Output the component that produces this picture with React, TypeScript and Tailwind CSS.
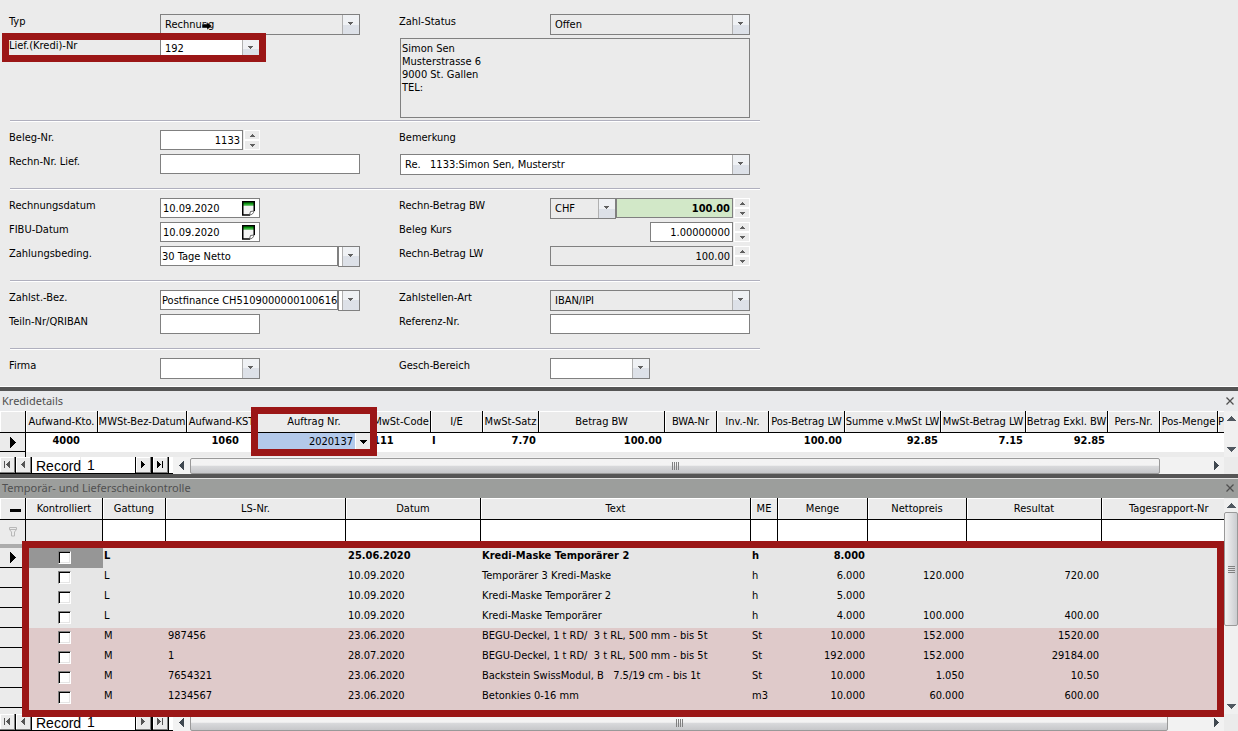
import { useState } from 'react'
import type { ReactNode } from 'react'
import clsx from 'clsx'

interface Position {
  gattung: string
  lsNr: string
  datum: string
  text: string
  me: string
  menge: string
  nettopreis: string
  resultat: string
}

const positionen: Position[] = [
  { gattung: 'L', lsNr: '', datum: '25.06.2020', text: 'Kredi-Maske Temporärer 2', me: 'h', menge: '8.000', nettopreis: '', resultat: '' },
  { gattung: 'L', lsNr: '', datum: '10.09.2020', text: 'Temporärer 3 Kredi-Maske', me: 'h', menge: '6.000', nettopreis: '120.000', resultat: '720.00' },
  { gattung: 'L', lsNr: '', datum: '10.09.2020', text: 'Kredi-Maske Temporärer 2', me: 'h', menge: '5.000', nettopreis: '', resultat: '' },
  { gattung: 'L', lsNr: '', datum: '10.09.2020', text: 'Kredi-Maske Temporärer', me: 'h', menge: '4.000', nettopreis: '100.000', resultat: '400.00' },
  { gattung: 'M', lsNr: '987456', datum: '23.06.2020', text: 'BEGU-Deckel, 1 t RD/  3 t RL, 500 mm - bis 5t', me: 'St', menge: '10.000', nettopreis: '152.000', resultat: '1520.00' },
  { gattung: 'M', lsNr: '1', datum: '28.07.2020', text: 'BEGU-Deckel, 1 t RD/  3 t RL, 500 mm - bis 5t', me: 'St', menge: '192.000', nettopreis: '152.000', resultat: '29184.00' },
  { gattung: 'M', lsNr: '7654321', datum: '23.06.2020', text: 'Backstein SwissModul, B   7.5/19 cm - bis 1t', me: 'St', menge: '10.000', nettopreis: '1.050', resultat: '10.50' },
  { gattung: 'M', lsNr: '1234567', datum: '23.06.2020', text: 'Betonkies 0-16 mm', me: 'm3', menge: '10.000', nettopreis: '60.000', resultat: '600.00' },
]

const detailColumns = [
  { title: 'Aufwand-Kto.', width: 'w-[72px]', value: '4000', cell: 'text-right pr-[18px]' },
  { title: 'MWSt-Bez-Datum', width: 'w-[89px]', value: '', cell: '' },
  { title: 'Aufwand-KST', width: 'w-[70px]', value: '1060', cell: 'text-right pr-[18px]' },
  { title: 'Auftrag Nr.', width: 'w-[115px]', value: '2020137', cell: '' },
  { title: 'MwSt-Code', width: 'w-[59px]', value: '111', cell: 'pl-px' },
  { title: 'I/E', width: 'w-[52px]', value: 'I', cell: 'pl-px' },
  { title: 'MwSt-Satz', width: 'w-[56px]', value: '7.70', cell: 'text-right pr-[3px]' },
  { title: 'Betrag BW', width: 'w-[126px]', value: '100.00', cell: 'text-right pr-[3px]' },
  { title: 'BWA-Nr', width: 'w-[52px]', value: '', cell: '' },
  { title: 'Inv.-Nr.', width: 'w-[52px]', value: '', cell: '' },
  { title: 'Pos-Betrag LW', width: 'w-[76px]', value: '100.00', cell: 'text-right pr-[3px]' },
  { title: 'Summe v.MwSt LW', width: 'w-[96px]', value: '92.85', cell: 'text-right pr-[3px]' },
  { title: 'MwSt-Betrag LW', width: 'w-[85px]', value: '7.15', cell: 'text-right pr-[3px]' },
  { title: 'Betrag Exkl. BW', width: 'w-[82px]', value: '92.85', cell: 'text-right pr-[3px]' },
  { title: 'Pers-Nr.', width: 'w-[52px]', value: '', cell: '' },
  { title: 'Pos-Menge', width: 'w-[58px]', value: '', cell: '' },
]

const kontrollColumns = [
  { title: 'Kontrolliert', width: 'w-[77px]' },
  { title: 'Gattung', width: 'w-[63px]' },
  { title: 'LS-Nr.', width: 'w-[180px]' },
  { title: 'Datum', width: 'w-[135px]' },
  { title: 'Text', width: 'w-[270px]' },
  { title: 'ME', width: 'w-[27px]' },
  { title: 'Menge', width: 'w-[90px]' },
  { title: 'Nettopreis', width: 'w-[99px]' },
  { title: 'Resultat', width: 'w-[135px]' },
]

const box = 'h-5 min-w-0 border border-[#808080] bg-white outline-none'
const th = 'h-full overflow-hidden border-r border-b border-black bg-[#ebebeb] p-0 font-normal leading-4 whitespace-nowrap shadow-[inset_1px_1px_0_#fff]'

function Triangle({ dir, size = 5, color = '#606060' }: { dir: 'up' | 'down' | 'left' | 'right'; size?: number; color?: string }) {
  const half = Math.ceil(size / 2)
  const vertical = dir === 'up' || dir === 'down'
  const w = vertical ? size : half
  const h = vertical ? half : size
  const points = {
    up: `0,${h} ${w},${h} ${w / 2},0`,
    down: `0,0 ${w},0 ${w / 2},${h}`,
    left: `${w},0 ${w},${h} 0,${h / 2}`,
    right: `0,0 0,${h} ${w},${h / 2}`,
  }[dir]
  return (
    <svg width={w} height={h} viewBox={`0 0 ${w} ${h}`} shapeRendering="crispEdges" className="shrink-0">
      <polygon points={points} fill={color} />
    </svg>
  )
}

function ArrowFace() {
  return (
    <span className="flex h-full w-4 items-center justify-center bg-linear-to-b from-[#eff1f4] from-50% to-[#dde1e8] to-50% pr-px pb-[2px]">
      <Triangle dir="down" />
    </span>
  )
}

function Combo({ id, value, className, label }: { id: string; value: string; className: string; label?: string }) {
  return (
    <div className={clsx('relative h-[21px] border border-[#808080]', className)}>
      <select id={id} aria-label={label} className="h-full w-full appearance-none bg-transparent pr-5 pl-1 outline-none">
        <option>{value}</option>
      </select>
      <span className="pointer-events-none absolute inset-y-0 right-0 border-l border-[#b0b0b0]">
        <ArrowFace />
      </span>
    </div>
  )
}

function Spinner() {
  return (
    <span className="ml-px flex h-5 w-4 flex-col justify-between border border-white bg-white">
      <button type="button" aria-label="Erhöhen" className="flex h-2 items-center justify-center bg-[#ebebeb]">
        <Triangle dir="up" />
      </button>
      <button type="button" aria-label="Verringern" className="flex h-2 items-center justify-center bg-[#ebebeb]">
        <Triangle dir="down" />
      </button>
    </span>
  )
}

function DateField({ id, value }: { id: string; value: string }) {
  return (
    <div className="flex h-5 w-[100px] items-center border border-[#808080] bg-white pr-1">
      <input id={id} defaultValue={value} className="h-full w-full min-w-0 pl-[2px] outline-none" />
      <button type="button" aria-label="Kalender">
        <svg width="13" height="15" viewBox="0 0 13 15">
          <path d="M.5 .5h11.500v10l-3.500 3.500h-8z" fill="#f4f4f4" />
          <path d="M1 1h11v3.500H1z" fill="#0c9412" />
          <path d="M1 3.500h11v1H1z" fill="#5cc05c" />
          <path d="M8 14H.75V.75h11.500V10" fill="none" stroke="#000" strokeWidth="1.500" />
          <path d="M12 10c-.5 2.500-2 3.800-4.500 4l1-3.500z" fill="#fff" stroke="#444" strokeWidth=".8" />
        </svg>
      </button>
    </div>
  )
}

function SplitField({ id, value }: { id: string; value: string }) {
  return (
    <>
      <input id={id} defaultValue={value} className={clsx(box, 'w-[178px] pl-px')} />
      <button type="button" aria-label="Auswahl öffnen" className="flex h-[21px] w-[22px] justify-end border border-[#808080] bg-white">
        <span className="h-full border-l border-[#b0b0b0]">
          <ArrowFace />
        </span>
      </button>
    </>
  )
}

function Row({ label, id, children, className }: { label: string; id?: string; children?: ReactNode; className?: string }) {
  return (
    <div className={clsx('flex h-5', className)}>
      <label htmlFor={id} className="-ml-px w-[151px] shrink-0 leading-4">{label}</label>
      {children}
    </div>
  )
}

function Section({ left, right, first, last }: { left: ReactNode; right: ReactNode; first?: boolean; last?: boolean }) {
  return (
    <section
      className={clsx(
        'grid grid-cols-[350px_350px] gap-x-10',
        first ? 'pt-[14px] pb-[2px]' : 'border-t border-[#b0b0be] pt-[9px] shadow-[inset_0_1px_0_#fff]',
        !first && (last ? 'pb-2' : 'pb-[14px]'),
      )}
    >
      <div className="flex flex-col gap-1">{left}</div>
      <div className="flex flex-col gap-1">{right}</div>
    </section>
  )
}

function TitleBar({ title, active }: { title: string; active?: boolean }) {
  return (
    <div className={clsx('flex h-5 items-center justify-between pr-1 pl-[2px]', active ? 'bg-[#9c9e9c] shadow-[inset_0_1px_0_#e0e0e0]' : 'bg-[#e9eaec]')}>
      <h2 className="font-['Noto_Sans',sans-serif] text-[11px] text-[#505050]">{title}</h2>
      <button type="button" aria-label={`${title} schliessen`}>
        <svg width="8" height="8" viewBox="0 0 8 8">
          <path d="M.5 .5l7 7M7.500 .5l-7 7" stroke="#505050" strokeWidth="1.300" />
        </svg>
      </button>
    </div>
  )
}

function NavButton({ label, dir, stop, active = true }: { label: string; dir: 'left' | 'right'; stop?: boolean; active?: boolean }) {
  const color = active ? '#000' : '#555'
  return (
    <button
      type="button"
      aria-label={label}
      className="flex h-4 w-[15px] items-center justify-center gap-px border-r border-b border-[#808080] bg-[#ebebeb] shadow-[inset_1px_1px_0_#fff]"
    >
      {stop && dir === 'left' && <svg width="1" height="7"><rect width="1" height="7" fill={color} /></svg>}
      <Triangle dir={dir} size={7} color={color} />
      {stop && dir === 'right' && <svg width="1" height="7"><rect width="1" height="7" fill={color} /></svg>}
    </button>
  )
}

function RecordBar({ id, active, thumb }: { id: string; active?: boolean; thumb: string }) {
  return (
    <div className="flex h-[17px] bg-white">
      <div className="flex w-[173px] shrink-0 border-b border-black font-['Liberation_Sans'] text-[14px] leading-[18px]">
        <div className="flex gap-px border-r border-black bg-black">
          <NavButton label="Erster Datensatz" dir="left" stop active={false} />
          <NavButton label="Vorheriger Datensatz" dir="left" active={false} />
        </div>
        <label htmlFor={id} className="w-[49px] border-r border-[#ebebeb] pl-1">Record</label>
        <input id={id} defaultValue="1" className="w-0 min-w-0 grow pl-[6px] outline-none" />
        <div className="mr-1 flex gap-[2px] border-x border-black bg-black">
          <NavButton label="Nächster Datensatz" dir="right" active={active} />
          <NavButton label="Letzter Datensatz" dir="right" stop active={active} />
        </div>
      </div>
      <div className="flex grow items-center bg-[#f2f2f2]">
        <span className="flex w-[17px] justify-center"><Triangle dir="left" size={9} color="#404850" /></span>
        <div className="flex h-4 grow items-center">
          <div className={clsx('flex h-4 items-center justify-center gap-px rounded-[2px] border border-[#999] bg-linear-to-b from-[#f3f3f3] from-45% via-[#d9dadc] via-50% to-[#c6c7ca]', thumb)}>
            <span className="h-2 w-px bg-[#808080]" />
            <span className="h-2 w-px bg-[#808080]" />
            <span className="h-2 w-px bg-[#808080]" />
            <span className="h-2 w-px bg-[#808080]" />
          </div>
        </div>
        <span className="flex w-4 justify-center"><Triangle dir="right" size={9} color="#404850" /></span>
      </div>
      <div className="w-[14px] shrink-0 bg-[#ebebeb]" />
    </div>
  )
}

function VerticalBar({ children }: { children?: ReactNode }) {
  return (
    <div className="flex w-[14px] shrink-0 flex-col items-center bg-[#f0f0f0] py-[5px]">
      <Triangle dir="up" size={9} color="#505860" />
      <div className="w-full grow pt-1">{children}</div>
      <Triangle dir="down" size={9} color="#505860" />
    </div>
  )
}

function Highlight({ className }: { className: string }) {
  return <div className={clsx('pointer-events-none absolute z-10 border-[7px] border-[#9b1616]', className)} />
}

function BelegForm() {
  return (
    <form className="border-b border-white pl-[10px]">
      <div className="w-[750px]">
        <Section
          first
          left={
            <>
              <Row label="Typ" id="typ">
                <div className="relative w-[200px]">
                  <Combo id="typ" value="Rechnung" className="w-full" />
                  <svg width="12" height="10" viewBox="0 0 12 10" className="pointer-events-none absolute top-[7px] left-[41px]">
                    <path d="M1 3h5V1l5 4-5 4V7H1z" fill="#000" stroke="#fff" strokeWidth=".4" />
                  </svg>
                </div>
              </Row>
              <Row label="Lief.(Kredi)-Nr" id="kredi" className="relative">
                <Combo id="kredi" value="192" className="w-[100px] bg-white" />
                <Highlight className="-top-[5px] -left-2 h-[29px] w-[264px]" />
              </Row>
            </>
          }
          right={
            <>
              <Row label="Zahl-Status" id="status">
                <Combo id="status" value="Offen" className="w-[200px]" />
              </Row>
              <textarea
                aria-label="Adresse"
                readOnly
                rows={5}
                defaultValue={'Simon Sen\nMusterstrasse 6\n9000 St. Gallen\nTEL:'}
                className="h-20 resize-none border border-[#808080] px-px pt-[3px] leading-[13px] outline-none"
              />
            </>
          }
        />
        <Section
          left={
            <>
              <Row label="Beleg-Nr." id="beleg">
                <input id="beleg" defaultValue="1133" className={clsx(box, 'w-[83px] px-[2px] text-right')} />
                <Spinner />
              </Row>
              <Row label="Rechn-Nr. Lief." id="rechnNr">
                <input id="rechnNr" className={clsx(box, 'w-[200px] px-[2px]')} />
              </Row>
            </>
          }
          right={
            <>
              <Row label="Bemerkung" id="bemerkung" />
              <Combo id="bemerkung" value={'Re.\u00a0\u00a0 1133:Simon Sen, Musterstr'} className="-mb-px w-full bg-white" />
            </>
          }
        />
        <Section
          left={
            <>
              <Row label="Rechnungsdatum" id="rdatum">
                <DateField id="rdatum" value="10.09.2020" />
              </Row>
              <Row label="FIBU-Datum" id="fdatum">
                <DateField id="fdatum" value="10.09.2020" />
              </Row>
              <Row label="Zahlungsbeding." id="zahlbed">
                <SplitField id="zahlbed" value="30 Tage Netto" />
              </Row>
            </>
          }
          right={
            <>
              <Row label="Rechn-Betrag BW" id="betragBw">
                <Combo id="waehrung" label="Währung" value="CHF" className="w-[66px]" />
                <input id="betragBw" defaultValue="100.00" className="h-5 w-[117px] border border-[#808080] bg-[#d2e8c8] px-[2px] text-right font-bold outline-none" />
                <Spinner />
              </Row>
              <Row label="Beleg Kurs" id="kurs">
                <input id="kurs" defaultValue="1.00000000" className={clsx(box, 'ml-[100px] w-[83px] px-[2px] text-right')} />
                <Spinner />
              </Row>
              <Row label="Rechn-Betrag LW" id="betragLw">
                <input id="betragLw" readOnly defaultValue="100.00" className="h-5 w-[183px] border border-[#808080] px-[2px] text-right outline-none" />
                <Spinner />
              </Row>
            </>
          }
        />
        <Section
          left={
            <>
              <Row label="Zahlst.-Bez." id="zahlst">
                <SplitField id="zahlst" value="Postfinance CH51090000001006164" />
              </Row>
              <Row label="Teiln-Nr/QRIBAN" id="teiln">
                <input id="teiln" className={clsx(box, 'w-[100px] px-[2px]')} />
              </Row>
            </>
          }
          right={
            <>
              <Row label="Zahlstellen-Art" id="art">
                <Combo id="art" value="IBAN/IPI" className="w-[200px]" />
              </Row>
              <Row label="Referenz-Nr." id="referenz">
                <input id="referenz" className={clsx(box, 'w-[200px] px-[2px]')} />
              </Row>
            </>
          }
        />
        <Section
          last
          left={
            <Row label="Firma" id="firma">
              <Combo id="firma" value="" className="w-[100px] bg-white" />
            </Row>
          }
          right={
            <Row label="Gesch-Bereich" id="bereich">
              <Combo id="bereich" value="" className="w-[100px] bg-white" />
            </Row>
          }
        />
      </div>
    </form>
  )
}

function Kredidetails() {
  return (
    <section>
      <TitleBar title="Kredidetails" />
      <div className="flex h-[46px]">
        <div className="relative min-w-0 grow">
          <table className="w-full table-fixed border-separate border-spacing-0">
            <thead>
              <tr className="h-[22px]">
                <th className={clsx(th, 'w-[26px]')} />
                {detailColumns.map(c => (
                  <th key={c.title} className={clsx(th, c.width)}>
                    <span className="-mx-2 block pt-px">{c.title}</span>
                  </th>
                ))}
                <th className={clsx(th, 'border-r-0 pt-px text-left')}>P</th>
              </tr>
            </thead>
            <tbody>
              <tr className="h-[19px] bg-white font-bold">
                <td className="border-r border-b border-black bg-[#ebebeb] p-0">
                  <span className="flex justify-center"><Triangle dir="right" size={11} color="#000" /></span>
                </td>
                {detailColumns.map(c =>
                  c.title === 'Auftrag Nr.' ? (
                    <td key={c.title} className="p-0 align-top font-normal">
                      <div className="flex h-[18px] bg-[#b3c9ea]">
                        <input aria-label="Auftrag Nr." defaultValue={c.value} className="h-4 w-0 min-w-0 grow pr-[2px] text-right outline-none" />
                        <button type="button" aria-label="Auftrag wählen" className="flex w-[15px] items-center justify-center border-l border-white bg-[#ebebeb]">
                          <Triangle dir="down" size={7} color="#000" />
                        </button>
                        <span className="w-[2px]" />
                      </div>
                    </td>
                  ) : (
                    <td key={c.title} className={clsx('p-0 align-top leading-4', c.cell)}>{c.value}</td>
                  ),
                )}
                <td />
              </tr>
            </tbody>
          </table>
          <div className="h-[5px] w-[26px] border-r border-black" />
          <Highlight className="-top-1 left-[251px] h-[49px] w-[126px]" />
        </div>
        <VerticalBar />
      </div>
      <RecordBar id="record1" active thumb="mr-12 grow" />
    </section>
  )
}

function Kontrolle() {
  const [checked, setChecked] = useState<number[]>([])

  const toggle = (i: number) => {
    setChecked(prev => (prev.includes(i) ? prev.filter(n => n !== i) : [...prev, i]))
  }

  return (
    <section>
      <TitleBar title="Temporär- und Lieferscheinkontrolle" active />
      <div className="flex">
        <div className="relative min-w-0 grow bg-[#dfcaca]">
          <table className="w-full table-fixed border-separate border-spacing-0">
            <thead>
              <tr className="h-[22px]">
                <th className={clsx(th, 'w-[26px] pt-[3px] pr-1')}>
                  <span className="ml-auto block h-[3px] w-[11px] bg-black" />
                </th>
                {kontrollColumns.map(c => (
                  <th key={c.title} className={clsx(th, c.width)}>
                    <span className="block pt-px">{c.title}</span>
                  </th>
                ))}
                <th className={clsx(th, 'border-r-0 pl-[27px] text-left')}>
                  <span className="block pt-px">Tagesrapport-Nr</span>
                </th>
              </tr>
              <tr className="h-6">
                <td className="border-r border-black bg-[#ebebeb] p-0">
                  <svg width="8" height="10" viewBox="0 0 8 10" className="mx-auto">
                    <path d="M.5 .5h7v2l-2 2.500v4h-3v-4l-2-2.500zM.5 2.500h7" fill="none" stroke="#b8b8b8" />
                  </svg>
                </td>
                {kontrollColumns.map((c, i) => (
                  <td key={c.title} className={clsx('border-r border-black p-0', i === 0 ? 'bg-[#ebebeb]' : 'bg-white')}>
                    {i > 0 && <input aria-label={`Filter ${c.title}`} className="block h-5 w-full px-[2px] outline-none" />}
                  </td>
                ))}
                <td className="bg-white p-0">
                  <input aria-label="Filter Tagesrapport-Nr" className="block h-5 w-full px-[2px] outline-none" />
                </td>
              </tr>
              <tr className="h-1">
                <td colSpan={11} className="bg-[#acacac] p-0" />
              </tr>
            </thead>
            <tbody>
              {positionen.map((p, i) => (
                <tr key={i} className={clsx('h-5 leading-4 whitespace-pre', p.gattung === 'L' ? 'bg-[#e6e6e6]' : 'bg-[#dfcaca]', i === 0 && 'font-bold')}>
                  <td className="border-b border-black bg-[#ebebeb] p-0">
                    {i === 0 && <span className="flex justify-center"><Triangle dir="right" size={11} color="#000" /></span>}
                  </td>
                  <td className={clsx('p-0 align-top', i === 0 && 'bg-[#969696]')}>
                    <input
                      type="checkbox"
                      aria-label={`Kontrolliert ${p.text}`}
                      checked={checked.includes(i)}
                      onChange={() => toggle(i)}
                      className="mx-auto mt-[3px] block size-[13px] appearance-none border border-t-[#808080] border-r-white border-b-white border-l-[#808080] bg-white shadow-[inset_1px_1px_0_#000,inset_-1px_-1px_0_#e6e6e6] checked:bg-[#404040]"
                    />
                  </td>
                  <td className="p-0 pl-px align-top">{p.gattung}</td>
                  <td className="p-0 pl-[2px] align-top">{p.lsNr}</td>
                  <td className="p-0 pl-[2px] align-top">{p.datum}</td>
                  <td className="p-0 pl-px align-top">{p.text}</td>
                  <td className="p-0 pl-px align-top">{p.me}</td>
                  <td className="p-0 pr-[3px] text-right align-top">{p.menge}</td>
                  <td className="p-0 pr-[3px] text-right align-top">{p.nettopreis}</td>
                  <td className="p-0 pr-[3px] text-right align-top">{p.resultat}</td>
                  <td className="p-0" />
                </tr>
              ))}
            </tbody>
          </table>
          <div className="h-[6px] w-[26px] bg-[#ebebeb]" />
          <Highlight className="top-[43px] right-0 -bottom-[3px] left-[22px]" />
        </div>
        <VerticalBar>
          <div className="flex h-[114px] w-full flex-col items-center justify-center gap-px rounded-[2px] border border-[#999] bg-linear-to-r from-[#f3f3f3] to-[#cbccd0]">
            <span className="h-px w-[7px] bg-[#808080]" />
            <span className="h-px w-[7px] bg-[#808080]" />
            <span className="h-px w-[7px] bg-[#808080]" />
            <span className="h-px w-[7px] bg-[#808080]" />
          </div>
        </VerticalBar>
      </div>
      <RecordBar id="record2" active={false} thumb="mr-10 grow" />
    </section>
  )
}

export default function App() {
  return (
    <main className="overflow-hidden bg-[#ebebeb] font-['DejaVu_Sans_Condensed','DejaVu_Sans',sans-serif] text-[11px] leading-[14px] text-black">
      <BelegForm />
      <div className="h-1 bg-[#555]" />
      <Kredidetails />
      <div className="h-1 bg-[#555]" />
      <Kontrolle />
    </main>
  )
}
